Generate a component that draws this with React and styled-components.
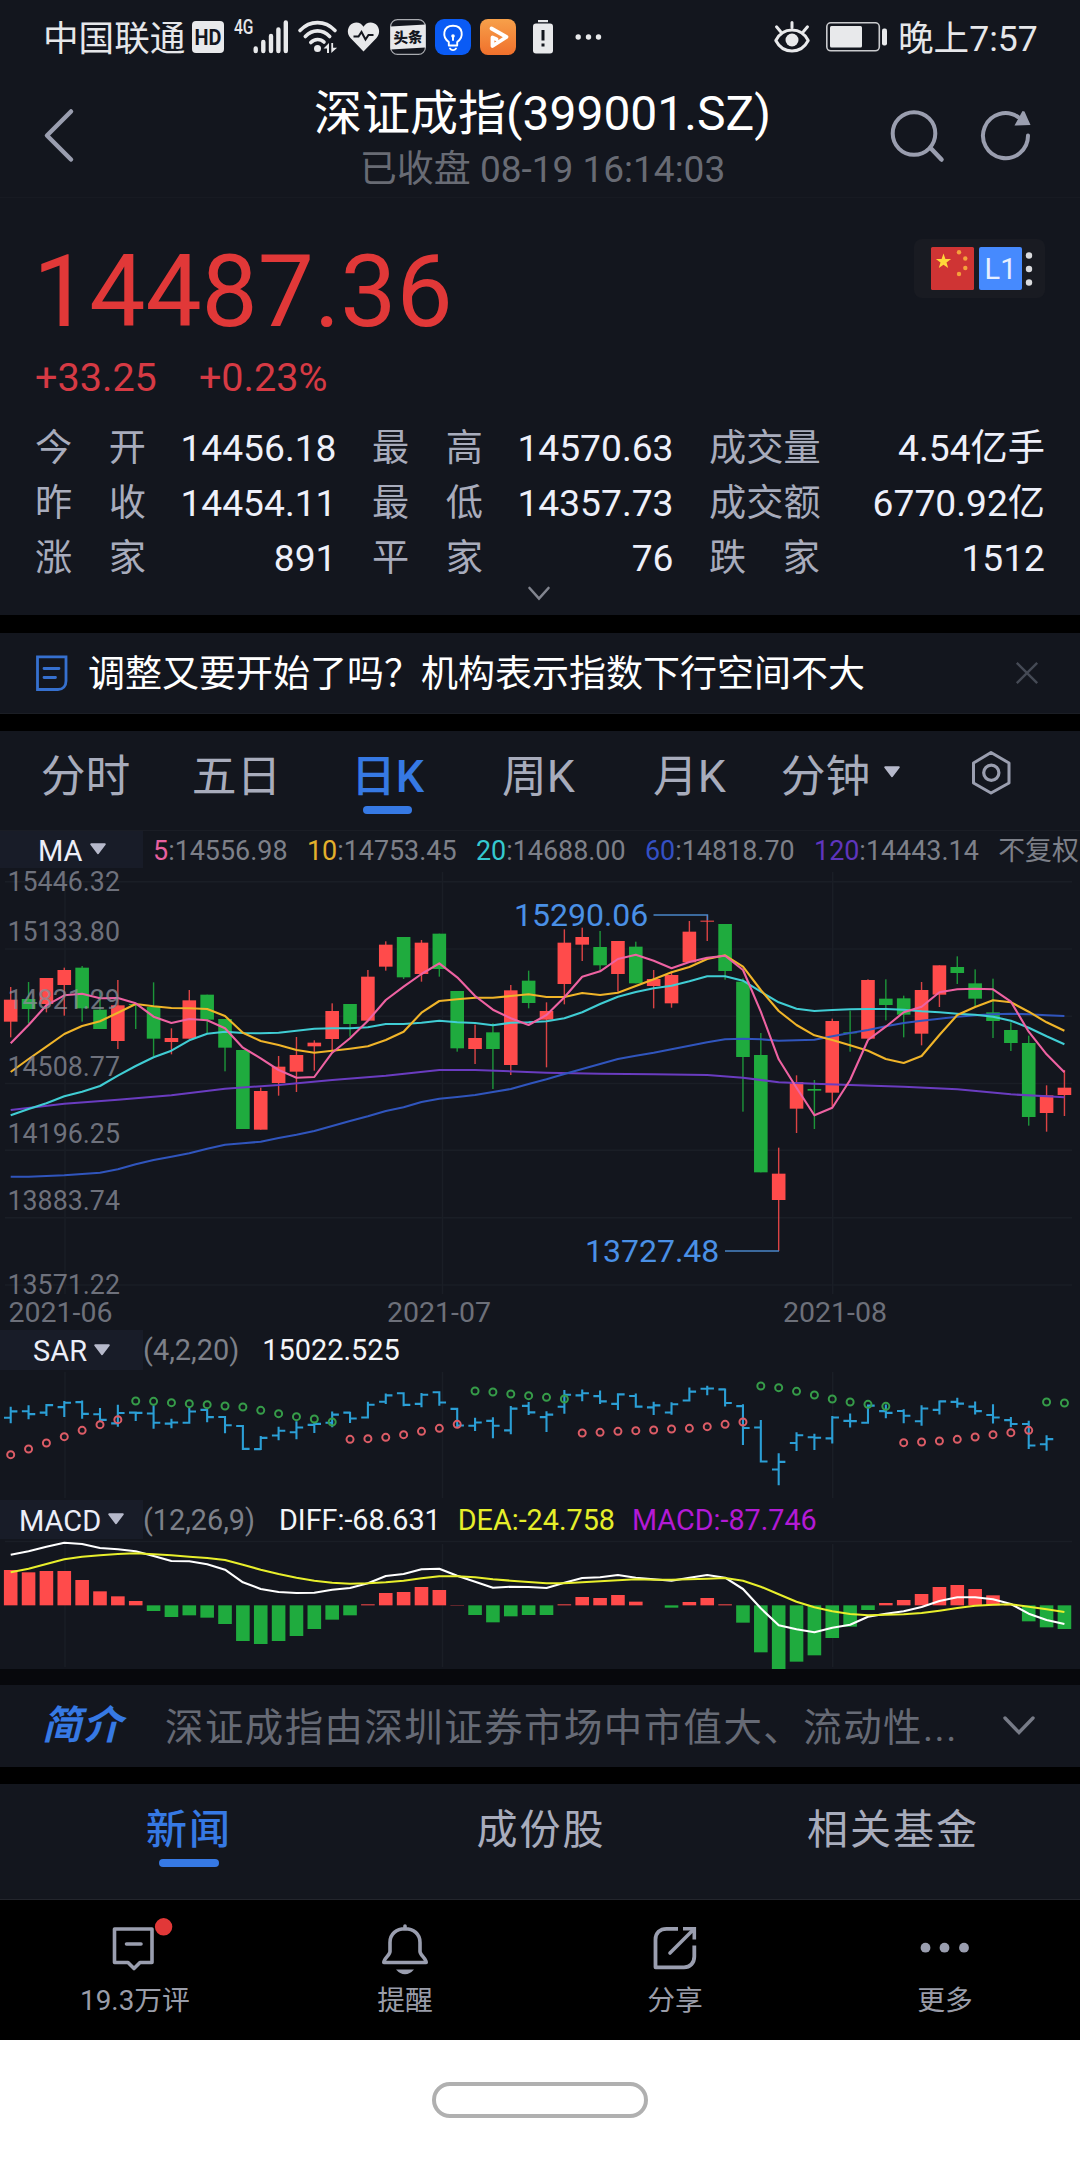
import React from "react";
import styled, { createGlobalStyle, css } from "styled-components";

const color = {
  panel: "#13161e",
  label: "#a8acbc",
  icon: "#9a9eaf",
  blue: "#3679e4",
  up: "#ff4b4b",
  down: "#1fab3e",
  red: "#e13838",
  grid: "#1a1e26",
};

const GlobalStyle = createGlobalStyle`
  *, *::before, *::after { box-sizing: border-box; }
  body {
    margin: 0;
    background: #000;
    font-family: Roboto, "Noto Sans CJK SC", sans-serif;
    font-weight: 400;
  }
  svg { display: block; flex: none; overflow: visible; }
  svg text { font-family: Roboto, "Noto Sans CJK SC", sans-serif; }
`;

const Screen = styled.main`
  width: 1080px;
  height: 2160px;
  display: flex;
  flex-direction: column;
  background: #000;
  overflow: hidden;
  white-space: nowrap;
`;

const Divider = styled.div`
  height: ${(p) => p.$h}px;
  flex: none;
  background: ${(p) => p.$bg || "#000"};
`;

/* ---------- status bar ---------- */

const StatusBar = styled.div`
  height: 74px;
  flex: none;
  display: flex;
  align-items: center;
  padding: 0 41px 0 43px;
  background: ${color.panel};
  color: #e6e7ea;
  font-size: 35.6px;
  line-height: 74px;
`;

const StatusText = styled.span`
  width: ${(p) => p.$w}px;
  margin-left: ${(p) => p.$ml || 0}px;
  padding-top: 3px;
`;

const StatusIcon = styled.svg`
  margin-left: ${(p) => (p.$push ? "auto" : `${p.$ml}px`)};
`;

/* ---------- header ---------- */

const Header = styled.header`
  height: 124px;
  flex: none;
  display: flex;
  align-items: center;
  justify-content: space-between;
  padding: 0 48px 0 42px;
  background: ${color.panel};
  border-bottom: 1px solid #171a22;
`;

const HeaderSide = styled.div`
  width: 142px;
  display: flex;
  gap: 38px;
  justify-content: ${(p) => (p.$end ? "flex-end" : "flex-start")};
`;

const TitleBlock = styled.div`
  display: flex;
  flex-direction: column;
  align-items: center;
  padding: 9px 0 0 11px;
`;

const Title = styled.h1`
  margin: 0;
  font-size: 48px;
  font-weight: 400;
  line-height: 60px;
  color: #fff;
`;

const Subtitle = styled.div`
  font-size: 37px;
  line-height: 52px;
  color: #686b74;
`;

/* ---------- quote ---------- */

const Quote = styled.section`
  height: 417px;
  flex: none;
  padding: 41px 35px 0 35px;
  display: flex;
  flex-direction: column;
  background: ${color.panel};
`;

const PriceRow = styled.div`
  display: flex;
  justify-content: space-between;
  align-items: flex-start;
`;

const Price = styled.div`
  margin-left: -2px;
  font-size: 100px;
  line-height: 105px;
  color: ${color.red};
`;

const Market = styled.div`
  width: 131px;
  height: 59px;
  display: flex;
  align-items: center;
  padding-left: 17px;
  border-radius: 8px;
  background: #191b22;
`;

const LevelBadge = styled.span`
  width: 43px;
  height: 43px;
  margin: 0 4px 0 5px;
  border-radius: 2px;
  background: #468afe;
  color: #e6efff;
  font-size: 29px;
  line-height: 44px;
  text-align: center;
`;

const Changes = styled.div`
  display: flex;
  gap: 42px;
  margin-top: 9px;
  font-size: 39.6px;
  line-height: 50px;
  color: #d63a44;
`;

const Stats = styled.dl`
  margin: 18px 0 0;
  display: grid;
  grid-template-columns: 301.5px 301.5px 1fr;
  grid-auto-rows: 55px;
  column-gap: 35.5px;
  font-size: 37.2px;
  line-height: 55px;
`;

const Stat = styled.div`
  display: flex;
  justify-content: space-between;
`;

const StatLabel = styled.dt`
  width: 111px;
  display: flex;
  justify-content: space-between;
  color: ${color.label};
`;

const StatValue = styled.dd`
  margin: 0;
  color: #eef0fa;
`;

const ExpandIcon = styled.svg`
  align-self: center;
  margin: 0 0 0 -2px;
`;

/* ---------- news strip ---------- */

const NewsStrip = styled.section`
  height: 81px;
  flex: none;
  display: flex;
  align-items: center;
  padding: 0 41px 0 35px;
  background: ${color.panel};
  border-bottom: 1px solid #1b1e25;
`;

const NewsText = styled.p`
  margin: 4px auto 0 19px;
  font-size: 37px;
  line-height: 78px;
  color: #fff;
`;

/* ---------- tabs ---------- */

const Tabs = styled.nav`
  height: ${(p) => p.$h}px;
  flex: none;
  display: flex;
  padding: 0 ${(p) => p.$pr}px 0 ${(p) => p.$pl}px;
  background: ${color.panel};
  border-bottom: 1px solid ${(p) => p.$line};
`;

const Tab = styled.div`
  flex: 1 1 0;
  position: relative;
  display: flex;
  justify-content: center;
  align-items: center;
  height: 90px;
  gap: 14px;
  padding-bottom: ${(p) => (p.$small ? 6 : 8)}px;
  color: ${color.label};
  font-size: ${(p) => (p.$small ? 41 : 44.8)}px;
  letter-spacing: ${(p) => (p.$small ? 2 : 0)}px;
  ${(p) =>
    p.$active &&
    css`
      color: ${color.blue};
      font-weight: 500;
      &::after {
        content: "";
        position: absolute;
        left: 50%;
        bottom: 7px;
        width: ${p.$bar}px;
        height: 8px;
        margin-left: ${-p.$bar / 2}px;
        border-radius: 4px;
        background: ${color.blue};
      }
    `}
`;

/* ---------- indicator rows ---------- */

const IndicatorRow = styled.div`
  height: ${(p) => p.$h}px;
  flex: none;
  display: flex;
  align-items: center;
  background: ${color.panel};
  font-size: ${(p) => p.$size}px;
  overflow: hidden;
`;

const IndicatorPick = styled.div`
  width: 143px;
  height: 100%;
  flex: none;
  display: flex;
  align-items: center;
  gap: 7px;
  padding: 2px 0 0 ${(p) => p.$pl}px;
  background: #181c28;
  color: #eceef8;
  font-size: 29px;

  svg {
    margin-bottom: 3px;
  }
`;

const Legend = styled.div`
  display: flex;
  align-items: baseline;
  gap: ${(p) => p.$gap}px;
  padding: ${(p) => p.$pt || 0}px 0 0 ${(p) => p.$pl}px;
  line-height: 36px;
`;

const Reading = styled.span`
  color: ${(p) => p.$c || "#7d8089"};
  margin-right: ${(p) => p.$mr || 0}px;
`;

const Canvas = styled.svg`
  background: ${color.panel};
  overflow: hidden;
`;

/* ---------- intro ---------- */

const Intro = styled.section`
  height: 82px;
  flex: none;
  display: flex;
  align-items: center;
  padding: 0 44px 0 42px;
  background: ${color.panel};
`;

const IntroTag = styled.strong`
  font-size: 39.5px;
  font-weight: 700;
  font-style: italic;
  letter-spacing: 1px;
  line-height: 80px;
  color: ${color.blue};
`;

const IntroText = styled.p`
  margin: 4px auto 0 42px;
  font-size: 38.4px;
  letter-spacing: 1.5px;
  line-height: 80px;
  color: #666a75;
`;

/* ---------- bottom ---------- */

const ActionBar = styled.nav`
  height: 140px;
  flex: none;
  display: grid;
  grid-template-columns: repeat(4, 1fr);
  background: #000;
`;

const Action = styled.div`
  display: flex;
  flex-direction: column;
  align-items: center;
  padding-top: 20px;
  color: #9a9da9;
  font-size: 27.8px;
  line-height: 36px;
`;

const ActionLabel = styled.span`
  margin-top: 3px;
`;

const SystemBar = styled.footer`
  height: 120px;
  flex: none;
  display: flex;
  align-items: center;
  justify-content: center;
  background: #fff;
`;

const HomePill = styled.div`
  width: 216px;
  height: 36px;
  border: 4.5px solid #b0b0b0;
  border-radius: 18px;
`;

/* ---------- data ---------- */

const STATS = [
  ["今开", "14456.18"], ["最高", "14570.63"], ["成交量", "4.54亿手"],
  ["昨收", "14454.11"], ["最低", "14357.73"], ["成交额", "6770.92亿"],
  ["涨家", "891"], ["平家", "76"], ["跌家", "1512"],
];

/* direction, body top, body bottom, wick top, wick bottom (thirds of a pixel) */
const CANDLES = [
  [1,419,485,381,532],[0,417,447,366,490],[1,354,432,354,457],[1,330,375,323,467],[0,323,445,318,485],
  [0,449,507,395,507],[1,436,543,360,567],[0,432,435,430,507],[0,441,536,367,588],[1,534,546,505,583],
  [1,421,536,390,536],[0,404,479,404,522],[0,477,563,477,634],[0,570,807,570,807],[1,693,809,683,809],
  [1,620,669,588,707],[1,585,635,531,696],[1,548,559,541,632],[1,453,537,430,574],[0,432,492,432,530],
  [1,350,482,330,482],[1,254,320,244,332],[0,231,352,231,357],[1,248,342,240,365],[0,221,327,221,350],
  [0,393,565,393,575],[1,534,567,494,612],[0,517,567,490,687],[1,391,615,375,645],[0,362,429,332,445],
  [1,453,479,427,622],[1,248,372,208,433],[1,231,254,203,303],[0,261,316,213,332],[1,243,342,243,395],
  [0,260,370,245,370],[1,357,378,330,445],[1,345,430,335,443],[1,215,307,183,307],[1,182,185,165,243],
  [0,192,333,192,359],[0,365,591,355,755],[0,585,937,519,937],[1,941,1020,863,1173],[1,666,746,646,819],
  [0,687,692,660,807],[1,483,698,476,740],[0,517,520,452,575],[1,360,536,358,536],[0,416,435,358,481],
  [0,415,464,407,532],[1,390,521,366,556],[1,316,404,316,441],[0,321,339,289,372],[0,370,416,328,440],
  [0,457,483,356,534],[0,510,549,487,573],[0,549,771,527,797],[1,706,759,676,815],[1,683,705,630,768],
];

const MA = [
  { c: "#6a3cc0", pts: [[0,750],[3,731],[6,719],[9,706],[12,686],[15,675],[18,660],[21,647],[24,630],[26,630],[30,638],[33,641],[36,643],[39,645],[41,653],[43,667],[45,671],[47,675],[50,680],[53,688],[56,703],[58,709],[59,712]] },
  { c: "#3055bd", pts: [950,950,948,946,942,938,928,913,900,890,880,866,854,850,845,834,824,813,798,783,769,753,742,726,716,711,705,696,687,672,658,642,627,612,597,587,578,568,557,547,538,536,538,542,541,539,529,519,510,499,489,482,476,470,466,463,461,463,466,468] },
  { c: "#40cdd4", pts: [766,747,730,709,695,678,647,618,592,572,541,521,515,519,520,518,512,506,505,505,502,492,492,488,482,487,489,496,488,487,484,475,457,432,410,396,385,377,364,349,349,362,395,427,446,453,450,448,447,447,449,454,457,461,464,470,482,503,529,553] },
  { c: "#f0b429", pts: [636,597,560,522,498,484,458,432,439,444,445,447,468,518,543,555,570,578,572,566,559,540,515,458,423,418,413,413,408,403,411,411,399,405,398,378,358,337,321,297,286,320,390,453,495,526,540,556,572,597,609,588,525,465,441,421,427,455,487,512] },
  { c: "#ee62a2", pts: [550,495,436,406,401,415,414,430,470,489,477,481,505,563,595,630,653,651,578,535,482,420,380,342,310,352,408,449,475,495,465,412,350,334,297,284,302,325,306,293,287,330,455,598,683,766,743,660,540,500,457,440,397,388,386,388,425,515,583,637] },
];

const SAR_DOTS = [
  [1, 0, [404,387,369,350,331,314,299]],
  [0, 7, [243,244,248,251,254,258,261,271,281,290,297,306]],
  [1, 19, [358,356,352,344,334,325,313]],
  [0, 26, [213,216,222,227,232,237]],
  [1, 32, [339,337,334,332,330,327,325,320,313,306]],
  [0, 42, [198,203,214,225,237,246,253,259]],
  [1, 50, [368,366,363,358,351,344,338,331]],
  [0, 58, [246,249]],
];

const MACD_BARS = [
  750,757,753,753,780,814,829,843,873,891,886,893,912,963,972,963,948,927,899,886,
  853,819,816,801,810,855,885,907,889,885,885,853,831,834,825,845,856,863,846,834,
  853,908,997,1047,1025,1006,954,920,870,849,840,822,801,795,807,826,855,904,922,927,
];
const DIFF = [
  704,694,680,668,672,684,688,694,708,723,724,733,749,787,807,816,819,818,809,804,
  790,768,762,748,746,767,785,803,800,801,804,788,774,772,765,773,778,782,773,765,
  773,807,865,916,928,937,923,914,890,881,874,861,843,832,832,838,852,881,900,912,
];
const DEA = [
  757,746,732,718,710,706,702,700,703,706,710,714,720,734,749,762,773,782,788,791,
  790,787,782,775,769,769,772,778,782,786,790,790,787,784,781,778,779,779,778,776,
  774,782,800,823,845,862,874,882,886,884,883,879,872,864,857,854,853,860,868,876,
];

const X0 = 10.7;
const STEP = 17.86;
const BODY = 13.6;
const cx = (i) => X0 + i * STEP;
const priceY = (v) => 860 + v / 3;
const sarY = (v) => 1320 + v / 3;
const candleToSar = (v) => sarY(403 + (v - 863) * 0.2903);
const path = (pts, y) =>
  pts
    .map((p, i) => (Array.isArray(p) ? p : [i, p]))
    .map(([i, v]) => `${cx(i).toFixed(1)},${y(v).toFixed(1)}`)
    .join(" ");

const MONTH_X = [65, 442.5, 832.7];
const PRICE_LABELS = [
  ["15446.32", 890.5], ["15133.80", 941], ["14821.29", 1008.7], ["14508.77", 1076],
  ["14196.25", 1143], ["13883.74", 1210.3], ["13571.22", 1294.3],
];

/* ---------- charts ---------- */

function MonthLines({ top, bottom }) {
  return MONTH_X.map((x) => (
    <line key={x} x1={x} x2={x} y1={top} y2={bottom} stroke={color.grid} strokeWidth="1.5" />
  ));
}

function PriceChart() {
  return (
    <Canvas width="1080" height="462" viewBox="0 868 1080 462">
      {[881.7, 949, 1016.2, 1083.4, 1150.3, 1217.7, 1285].map((y) => (
        <line key={y} x1="5" x2="1072" y1={y} y2={y} stroke={color.grid} strokeWidth="1.5" />
      ))}
      <MonthLines top={872} bottom={1294} />
      {CANDLES.map(([up, t, b, h, l], i) => {
        const c = up ? color.up : color.down;
        return (
          <g key={i} fill={c}>
            <rect x={cx(i) - 0.7} width="1.4" y={priceY(h)} height={(l - h) / 3} opacity="0.85" />
            <rect x={cx(i) - BODY / 2} width={BODY} y={priceY(t)} height={(b - t) / 3} />
          </g>
        );
      })}
      {MA.map((m) => (
        <polyline key={m.c} points={path(m.pts, priceY)} fill="none" stroke={m.c} strokeWidth="2.1" strokeLinejoin="round" />
      ))}
      <g fill="rgba(136,139,151,0.78)" fontSize="26.8">
        {PRICE_LABELS.map(([t, y]) => (
          <text key={t} x="7.5" y={y}>{t}</text>
        ))}
      </g>
      <g fill="#6d707a" fontSize="28.5">
        <text x="8.5" y="1321.5">2021-06</text>
        <text x="439" y="1321.5" textAnchor="middle">2021-07</text>
        <text x="835" y="1321.5" textAnchor="middle">2021-08</text>
      </g>
      <g stroke="#4a86c8" strokeWidth="1.4" fill="none">
        <path d="M653.5 915H707.5V920" />
        <path d="M725 1251H779" />
      </g>
      <g fill="#4a90e6" fontSize="32">
        <text x="514" y="925.5">15290.06</text>
        <text x="585" y="1261.5">13727.48</text>
      </g>
    </Canvas>
  );
}

function SarChart() {
  return (
    <Canvas width="1080" height="130" viewBox="0 1370 1080 130">
      <MonthLines top={1372} bottom={1498} />
      <g stroke="#2b9fd6" strokeWidth="2.1" fill="none">
        {CANDLES.slice(0, 59).map(([up, t, b, h, l], i) => {
          const x = cx(i);
          const open = candleToSar(up ? b : t);
          const close = candleToSar(up ? t : b);
          return (
            <path
              key={i}
              d={`M${x} ${candleToSar(h) - 1}V${candleToSar(l) + 1}M${x - 6.7} ${open}H${x}M${x} ${close}H${x + 6.7}`}
            />
          );
        })}
      </g>
      {SAR_DOTS.map(([up, start, ys]) =>
        ys.map((v, k) => (
          <circle
            key={start + k}
            cx={cx(start + k)}
            cy={sarY(v)}
            r="3.5"
            fill="none"
            stroke={up ? "#dc5c66" : "#369c49"}
            strokeWidth="2"
          />
        ))
      )}
    </Canvas>
  );
}

function MacdChart() {
  const zero = 856;
  return (
    <Canvas width="1080" height="130" viewBox="0 1539 1080 130">
      <line x1="5" x2="1072" y1="1541.5" y2="1541.5" stroke={color.grid} strokeWidth="1.5" />
      <MonthLines top={1544} bottom={1667} />
      {MACD_BARS.map((v, i) => (
        <rect
          key={i}
          x={cx(i) - BODY / 2}
          width={BODY}
          y={sarY(Math.min(v, zero))}
          height={Math.abs(v - zero) / 3}
          fill={v < zero ? color.up : color.down}
        />
      ))}
      <polyline points={path(DIFF, sarY)} fill="none" stroke="#fff" strokeWidth="2.1" strokeLinejoin="round" />
      <polyline points={path(DEA, sarY)} fill="none" stroke="#e8ef2c" strokeWidth="2.1" strokeLinejoin="round" />
    </Canvas>
  );
}

/* ---------- icons ---------- */

function Caret() {
  return (
    <svg width="16" height="12" viewBox="0 0 16 12">
      <path d="M1.2 1.2h13.6L8 10.2z" fill="#b6b9cb" stroke="#b6b9cb" strokeWidth="2" strokeLinejoin="round" />
    </svg>
  );
}

function StatusIcons() {
  return (
    <>
      <StatusIcon $ml={8} width="32" height="32" viewBox="0 0 32 32">
        <rect width="32" height="32" rx="4" fill="#e8e9eb" />
        <text x="16" y="24" textAnchor="middle" fontSize="22" fontWeight="700" textLength="27" lengthAdjust="spacingAndGlyphs" fill="#13161e">HD</text>
      </StatusIcon>
      <StatusIcon $ml={11} width="53" height="34" viewBox="0 0 53 34">
        <text x="-1" y="14" fontSize="20" fontWeight="500" textLength="19.5" lengthAdjust="spacingAndGlyphs" fill="#e6e7ea">4G</text>
        <g stroke="#e8e9eb" strokeWidth="4.4" strokeLinecap="round">
          <path d="M20.7 28.5V31M28.3 22V31M36 16V31M43.4 9.5V31M50.8 2.5V31" />
        </g>
      </StatusIcon>
      <StatusIcon $ml={10} width="39" height="34" viewBox="0 0 39 34">
        <g fill="none" stroke="#e8e9eb" strokeWidth="3.6" strokeLinecap="round">
          <path d="M2 10.5C12 0 27 0 37 10.5" />
          <path d="M7.3 16.5C14.5 9 24.5 9 31.7 16.5" />
          <path d="M12.8 22.5C16.5 18.5 22.5 18.5 26 22" />
        </g>
        <circle cx="19.5" cy="28.5" r="3.5" fill="#e8e9eb" />
        <path d="M31 23v10h-2v-4.5h-3.5zM33.3 33v-10h1.8v4.8h4z" fill="#e8e9eb" />
      </StatusIcon>
      <StatusIcon $ml={10} width="33" height="30" viewBox="0 0 33 30">
        <path d="M16.5 29.5L3.5 16C-1 11 .5 3.5 6 1.2c4-1.7 8.3-.2 10.5 3.5C18.7 1 23 -.5 27 1.2c5.5 2.3 7 9.8 2.5 14.8z" fill="#e8e9eb" />
        <path d="M6.5 14.5h5l3-4.5 4 7.5 3-4.5h5" fill="none" stroke="#13161e" strokeWidth="2" />
      </StatusIcon>
      <StatusIcon $ml={10} width="36" height="36" viewBox="0 0 36 36">
        <rect x=".6" y=".6" width="34.8" height="34.8" rx="7" fill="#13161e" stroke="#a9abb0" strokeWidth="1.2" />
        <path d="M.5 7.5L35.5 5.5V28.5L.5 30.5z" fill="#e8e9eb" />
        <text x="18" y="24" textAnchor="middle" fontSize="15" fontWeight="900" textLength="29" lengthAdjust="spacingAndGlyphs" transform="rotate(-3 18 18)" fill="#13161e">头条</text>
      </StatusIcon>
      <StatusIcon $ml={9} width="36" height="36" viewBox="0 0 36 36">
        <rect width="36" height="36" rx="9" fill="#0a5bf5" />
        <g fill="none" stroke="#fff" strokeWidth="1.9" strokeLinecap="round" strokeLinejoin="round">
          <path d="M13.8 26.5V23C7 18.5 7.5 6.8 18 6.8S29 18.5 22.2 23v3.5z" />
          <path d="M18 21v-4M15 29.5c1.5 2.2 4.5 2.2 6 0" />
        </g>
        <circle cx="18" cy="17" r="1.8" fill="#fff" />
      </StatusIcon>
      <StatusIcon $ml={9} width="36" height="36" viewBox="0 0 36 36">
        <defs>
          <linearGradient id="videoApp" x1="0" y1="0" x2="0" y2="1">
            <stop offset="0" stopColor="#f7a04a" />
            <stop offset="1" stopColor="#f0702c" />
          </linearGradient>
        </defs>
        <rect width="36" height="36" rx="8" fill="url(#videoApp)" />
        <path d="M11.5 9.5L26.5 18L12.5 27V18.5L16.5 20.3" fill="none" stroke="#fff" strokeWidth="3.8" strokeLinecap="round" strokeLinejoin="round" />
      </StatusIcon>
      <StatusIcon $ml={17} width="20" height="34" viewBox="0 0 20 34">
        <path d="M5 0h10v2.2H5z" fill="#e8e9eb" />
        <rect y="3.5" width="20" height="30" rx="3" fill="#e8e9eb" />
        <path d="M10 10v10.5M10 23.5v3" stroke="#13161e" strokeWidth="3" />
      </StatusIcon>
      <StatusIcon $ml={22} width="27" height="6" viewBox="0 0 27 6" fill="#e8e9eb">
        <circle cx="3.2" cy="3" r="2.7" />
        <circle cx="13.5" cy="3" r="2.7" />
        <circle cx="23.5" cy="3" r="2.7" />
      </StatusIcon>
      <StatusIcon $push width="36" height="34" viewBox="0 0 36 34">
        <g fill="none" stroke="#e8e9eb" strokeWidth="3" strokeLinecap="round">
          <path d="M1.8 20.5C9 6.5 27 6.5 34.2 20.5C27 34.5 9 34.5 1.8 20.5z" strokeLinejoin="round" />
          <path d="M18 7.5V2.5M6.5 11.5L2.5 6.8M29.5 11.5L33.5 6.8" />
        </g>
        <circle cx="18" cy="20" r="6.5" fill="#e8e9eb" />
      </StatusIcon>
      <StatusIcon $ml={16} width="61" height="30" viewBox="0 0 61 30">
        <rect x=".8" y=".8" width="52.5" height="28" rx="4" fill="none" stroke="#c9cacd" strokeWidth="1.6" />
        <rect x="4" y="4" width="32" height="21.5" rx="1.5" fill="#e8e9eb" />
        <rect x="56" y="6.5" width="5" height="17" rx="2" fill="#e8e9eb" />
      </StatusIcon>
    </>
  );
}

const STAR = "M0-8L1.9-2.5H7.6L3 1L4.7 6.5L0 3.2L-4.7 6.5L-3 1L-7.6-2.5H-1.9z";

function FlagIcon() {
  return (
    <svg width="43" height="43" viewBox="0 0 43 43">
      <rect width="43" height="43" rx="1.5" fill="#cf3434" />
      <path d={STAR} transform="translate(12.5 14.5)" fill="#ffd83a" />
      <g fill="#f5a13c">
        <circle cx="28" cy="5.3" r="2.2" />
        <circle cx="34.3" cy="11.5" r="2.2" />
        <circle cx="34.3" cy="21" r="2.2" />
        <circle cx="28" cy="27" r="2.2" />
      </g>
    </svg>
  );
}

const stroke = { fill: "none", stroke: color.icon, strokeWidth: 4, strokeLinecap: "round", strokeLinejoin: "round" };

function CommentIcon() {
  return (
    <svg width="80" height="60" viewBox="0 0 80 60">
      <path d="M19.5 9H57V42.5H45L39 48.5L33 42.5H19.5z M31.5 24H46" {...stroke} strokeWidth="3.6" />
      <circle cx="68.6" cy="6.8" r="8.7" fill={color.red} />
    </svg>
  );
}

function BellIcon() {
  return (
    <svg width="80" height="60" viewBox="0 0 80 60">
      <path d="M40 6V9M25 26V22.5C25 14 31.5 8.8 40 8.8S55 14 55 22.5V31.5C55 35 61.2 38.5 61.2 42.5H18.8C18.8 38.5 25 35 25 31.5z" {...stroke} strokeWidth="3.6" />
      <path d="M31 49.5h18q-4 4.7-9 4.7t-9-4.7z" fill={color.icon} />
    </svg>
  );
}

function ShareIcon() {
  return (
    <svg width="80" height="60" viewBox="0 0 80 60">
      <path d="M43 8.8H31.5C25 8.8 20.5 13 20.5 19.5V47.3H49C55 47.3 59.3 43 59.3 36.5V25.5" {...stroke} strokeLinecap="butt" strokeWidth="3.8" />
      <path d="M35 33L57 11" {...stroke} strokeWidth="3.6" />
      <path d="M48 8.8H59.3V19.5" {...stroke} strokeLinecap="butt" strokeLinejoin="miter" strokeWidth="3.6" />
    </svg>
  );
}

function MoreIcon() {
  return (
    <svg width="80" height="60" viewBox="0 0 80 60" fill={color.icon}>
      <circle cx="20.5" cy="27.7" r="4.9" />
      <circle cx="39.5" cy="27.7" r="4.9" />
      <circle cx="59" cy="27.7" r="4.9" />
    </svg>
  );
}

const ACTIONS = [
  ["19.3万评", CommentIcon],
  ["提醒", BellIcon],
  ["分享", ShareIcon],
  ["更多", MoreIcon],
];

const LEGEND = [
  ["5", "14556.98", "#e8609f"],
  ["10", "14753.45", "#e3b02c"],
  ["20", "14688.00", "#35c9d0"],
  ["60", "14818.70", "#3450c4"],
  ["120", "14443.14", "#5f35bd"],
];

export default function App() {
  return (
    <>
      <GlobalStyle />
      <Screen>
        <StatusBar>
          <StatusText $w={141}>中国联通</StatusText>
          <StatusIcons />
          <StatusText $w={141} $ml={11}>晚上7:57</StatusText>
        </StatusBar>

        <Header>
          <HeaderSide>
            <svg width="34" height="56" viewBox="0 0 34 56">
              <path d="M29 3.5L5 27.5L29 51.5" {...stroke} strokeWidth="4.5" />
            </svg>
          </HeaderSide>
          <TitleBlock>
            <Title>深证成指(399001.SZ)</Title>
            <Subtitle>已收盘 08-19 16:14:03</Subtitle>
          </TitleBlock>
          <HeaderSide $end>
            <svg width="54" height="54" viewBox="0 0 54 54">
              <circle cx="24" cy="24.5" r="21.3" {...stroke} />
              <path d="M41.5 40L51.5 50.5" {...stroke} strokeWidth="4.5" />
            </svg>
            <svg width="50" height="54" viewBox="0 0 50 54">
              <path d="M46 26.5A22.5 22.5 0 1 1 36 8" {...stroke} />
              <path d="M32.5 16.5L40.5 2L42.5 2.5L48.5 16z" fill={color.icon} />
            </svg>
          </HeaderSide>
        </Header>

        <Quote>
          <PriceRow>
            <Price>14487.36</Price>
            <Market>
              <FlagIcon />
              <LevelBadge>L1</LevelBadge>
              <svg width="8" height="36" viewBox="0 0 8 36" fill="#d9dadd">
                <circle cx="3" cy="4.5" r="3.2" />
                <circle cx="3" cy="18" r="3.2" />
                <circle cx="3" cy="31.5" r="3.2" />
              </svg>
            </Market>
          </PriceRow>
          <Changes>
            <span>+33.25</span>
            <span>+0.23%</span>
          </Changes>
          <Stats>
            {STATS.map(([label, value]) => (
              <Stat key={label}>
                <StatLabel>
                  {[...label].map((ch) => (
                    <span key={ch}>{ch}</span>
                  ))}
                </StatLabel>
                <StatValue>{value}</StatValue>
              </Stat>
            ))}
          </Stats>
          <ExpandIcon width="24" height="16" viewBox="0 0 24 16">
            <path d="M2.5 2L12 12.5L21.5 2" fill="none" stroke="#82858f" strokeWidth="2.6" strokeLinecap="round" />
          </ExpandIcon>
        </Quote>

        <Divider $h={18} />
        <NewsStrip>
          <svg width="34" height="38" viewBox="0 0 34 38">
            <path d="M2.5 2.8H31V27C31 32 28 35.5 23 35.5H2.5z M9 14.5H24M9 23.5H20.5" fill="none" stroke="#3670cf" strokeWidth="2.8" strokeLinecap="round" />
          </svg>
          <NewsText>调整又要开始了吗？机构表示指数下行空间不大</NewsText>
          <svg width="24" height="24" viewBox="0 0 24 24">
            <path d="M1.8 1.8L22.2 22.2M22.2 1.8L1.8 22.2" stroke="#454a55" strokeWidth="2.4" />
          </svg>
        </NewsStrip>
        <Divider $h={17} />

        <Tabs $h={100} $pl={10} $pr={13} $line="#1a1d25">
          <Tab>分时</Tab>
          <Tab>五日</Tab>
          <Tab $active $bar={49}>日K</Tab>
          <Tab>周K</Tab>
          <Tab>月K</Tab>
          <Tab>
            分钟
            <Caret />
          </Tab>
          <Tab>
            <svg width="42" height="46" viewBox="0 0 42 46">
              <path d="M20 3.5L38 14V34L20 44L2.5 34V14z" {...stroke} strokeWidth="3" />
              <circle cx="20.3" cy="23.7" r="7.6" {...stroke} strokeWidth="3.2" />
            </svg>
          </Tab>
        </Tabs>

        <IndicatorRow $h={37} $size={26.9}>
          <IndicatorPick $pl={38}>
            MA
            <Caret />
          </IndicatorPick>
          <Legend $gap={19.4} $pl={10} $pt={2}>
            {LEGEND.map(([n, v, c]) => (
              <Reading key={n}>
                <Reading $c={c}>{n}</Reading>:{v}
              </Reading>
            ))}
            <Reading>不复权</Reading>
          </Legend>
        </IndicatorRow>
        <PriceChart />

        <IndicatorRow $h={40} $size={28.9}>
          <IndicatorPick $pl={33}>
            SAR
            <Caret />
          </IndicatorPick>
          <Legend $gap={23} $pl={0}>
            <Reading>(4,2,20)</Reading>
            <Reading $c="#f4f5f8">15022.525</Reading>
          </Legend>
        </IndicatorRow>
        <SarChart />

        <IndicatorRow $h={39} $size={28.75}>
          <IndicatorPick $pl={19}>
            MACD
            <Caret />
          </IndicatorPick>
          <Legend $gap={17} $pl={0}>
            <Reading $mr={7}>(12,26,9)</Reading>
            <Reading $c="#f4f5f8">DIFF:-68.631</Reading>
            <Reading $c="#e6ef2a">DEA:-24.758</Reading>
            <Reading $c="#b31ad6">MACD:-87.746</Reading>
          </Legend>
        </IndicatorRow>
        <MacdChart />

        <Divider $h={16} $bg="#07080c" />
        <Intro>
          <IntroTag>简介</IntroTag>
          <IntroText>深证成指由深圳证券市场中市值大、流动性...</IntroText>
          <svg width="34" height="22" viewBox="0 0 34 22">
            <path d="M3 3L17 17.5L31 3" fill="none" stroke="#777b87" strokeWidth="3.4" strokeLinecap="round" />
          </svg>
        </Intro>
        <Divider $h={17} />

        <Tabs $h={116} $pl={13} $pr={11} $line="#23252c">
          <Tab $small $active $bar={60}>新闻</Tab>
          <Tab $small>成份股</Tab>
          <Tab $small>相关基金</Tab>
        </Tabs>

        <ActionBar>
          {ACTIONS.map(([label, Icon]) => (
            <Action key={label}>
              <Icon />
              <ActionLabel>{label}</ActionLabel>
            </Action>
          ))}
        </ActionBar>

        <SystemBar>
          <HomePill />
        </SystemBar>
      </Screen>
    </>
  );
}
